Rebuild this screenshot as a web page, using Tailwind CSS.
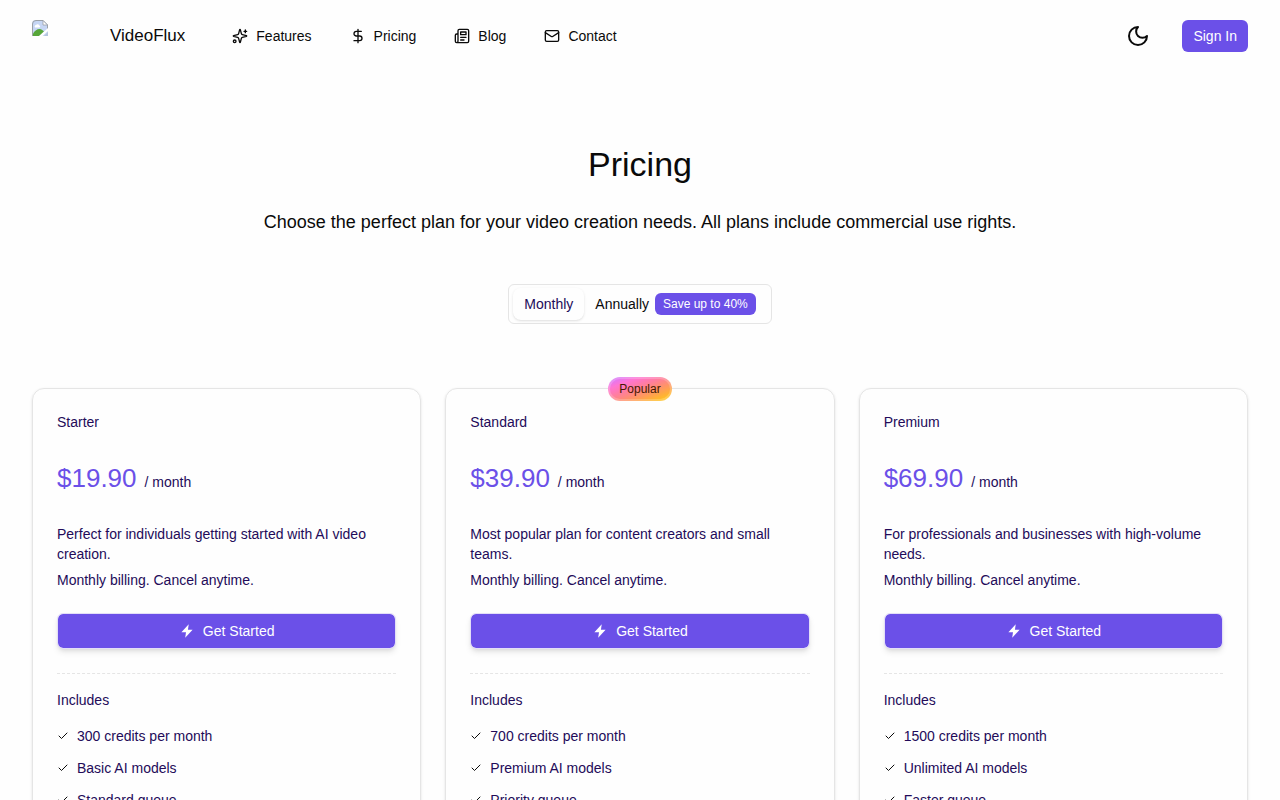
<!DOCTYPE html>
<html lang="en">
<head>
  <meta charset="UTF-8" />
  <meta name="viewport" content="width=device-width, initial-scale=1.0" />
  <title>Pricing - VideoFlux</title>
  <script src="https://cdn.jsdelivr.net/npm/@tailwindcss/browser@4"></script>
</head>
<body class="h-screen overflow-hidden bg-[#fefefe] font-['Liberation_Sans',Arial,sans-serif] text-sm text-[#0a0a0a]">

  <!-- Header -->
  <header class="flex items-center justify-between px-8 py-5">
    <div class="flex items-center">
      <a href="#" class="flex items-center gap-[62px] text-[17px] leading-8">
        <svg class="size-4 self-start" viewBox="0 0 16 16" aria-hidden="true">
          <path d="M4 0h7l5 5v11H0V4a4 4 0 0 1 4-4z" fill="#c6d6f4" />
          <path d="M.5 16V4A3.500 3.500 0 0 1 4 .5h7l4.500 4.500v4" fill="none" stroke="#9aa0a6" />
          <path d="M11 .5V5h4.500z" fill="#fff" stroke="#9aa0a6" stroke-width=".8" />
          <path d="M3 7.500a1.500 1.500 0 0 1 1-2.500 2 2 0 0 1 3.500.5 1.200 1.200 0 0 1 0 2z" fill="#fff" />
          <path d="M1 16v-2.500C3 10.500 5 9 7.500 9c2 0 3.500 1.500 4.500 2.500L7.500 16z" fill="#57a639" />
          <path d="M7 16l9-8v3l-5.500 5z" fill="#fff" />
          <path d="M12 16l4-4v4z" fill="#b4c4dc" />
        </svg>
        <span>VideoFlux</span>
      </a>
      <nav class="ml-7 flex items-center" aria-label="Main">
        <a href="#features" class="flex items-center gap-2 px-[19px]">
          <svg class="size-4" viewBox="0 0 24 24" fill="none" stroke="currentColor" stroke-width="2" stroke-linecap="round" stroke-linejoin="round">
            <path d="M9.937 15.500A2 2 0 0 0 8.500 14.063l-6.135-1.582a.5.5 0 0 1 0-.962L8.500 9.936A2 2 0 0 0 9.937 8.500l1.582-6.135a.5.5 0 0 1 .963 0L14.063 8.500A2 2 0 0 0 15.500 9.937l6.135 1.581a.5.5 0 0 1 0 .964L15.500 14.063a2 2 0 0 0-1.437 1.437l-1.582 6.135a.5.5 0 0 1-.963 0z" />
            <path d="M20 3v4M22 5h-4" />
            <circle cx="4" cy="20" r="2" />
          </svg>
          Features
        </a>
        <a href="#pricing" class="flex items-center gap-2 px-[19px]">
          <svg class="size-4" viewBox="0 0 24 24" fill="none" stroke="currentColor" stroke-width="2" stroke-linecap="round" stroke-linejoin="round">
            <path d="M12 2v20M17 5H9.500a3.500 3.500 0 0 0 0 7h5a3.500 3.500 0 0 1 0 7H6" />
          </svg>
          Pricing
        </a>
        <a href="#blog" class="flex items-center gap-2 px-[19px]">
          <svg class="size-4" viewBox="0 0 24 24" fill="none" stroke="currentColor" stroke-width="2" stroke-linecap="round" stroke-linejoin="round">
            <path d="M4 22h16a2 2 0 0 0 2-2V4a2 2 0 0 0-2-2H8a2 2 0 0 0-2 2v16a2 2 0 0 1-2 2m0 0a2 2 0 0 1-2-2v-9c0-1.100.9-2 2-2h2" />
            <path d="M18 14h-8M15 18h-5M10 6h8v4h-8z" />
          </svg>
          Blog
        </a>
        <a href="#contact" class="flex items-center gap-2 px-[19px]">
          <svg class="size-4" viewBox="0 0 24 24" fill="none" stroke="currentColor" stroke-width="2" stroke-linecap="round" stroke-linejoin="round">
            <rect x="2" y="4" width="20" height="16" rx="2" />
            <path d="m22 7-8.970 5.700a1.940 1.940 0 0 1-2.060 0L2 7" />
          </svg>
          Contact
        </a>
      </nav>
    </div>
    <div class="flex items-center gap-8">
      <button type="button" aria-label="Toggle theme">
        <svg class="size-6" viewBox="0 0 24 24" fill="none" stroke="currentColor" stroke-width="2" stroke-linecap="round" stroke-linejoin="round">
          <path d="M12 3a6 6 0 0 0 9 9 9 9 0 1 1-9-9Z" />
        </svg>
      </button>
      <a href="#signin" class="rounded-md bg-[#6b50e8] px-[11px] py-[6px] leading-5 text-white">Sign In</a>
    </div>
  </header>

  <main class="px-8 pt-[72px]">
    <div class="text-center">
      <h1 class="text-[34px] leading-10">Pricing</h1>
      <p class="mt-6 text-lg leading-7">Choose the perfect plan for your video creation needs. All plans include commercial use rights.</p>
    </div>

    <!-- Billing period -->
    <div role="radiogroup" aria-label="Billing period" class="mx-auto mt-12 flex h-10 w-fit items-center rounded-md border border-[#e5e5e5] px-1">
      <label class="flex h-8 cursor-pointer items-center rounded-lg px-[11px] text-[#230b59] shadow-sm">
        <input type="radio" name="period" value="month" class="sr-only" checked />
        Monthly
      </label>
      <label class="flex h-8 cursor-pointer items-center gap-[6px] px-[11px]">
        <input type="radio" name="period" value="year" class="sr-only" />
        Annually
        <span class="rounded-md bg-[#6b50e8] px-2 py-[3px] text-xs text-white">Save up to 40%</span>
      </label>
    </div>

    <!-- Plans -->
    <div id="plans" class="mt-16 grid grid-cols-3 gap-6 text-[#230b59]"></div>
  </main>

  <script>
    const plans = [
      {
        name: "Starter",
        price: "$19.90",
        text: "Perfect for individuals getting started with AI video creation.",
        items: ["300 credits per month", "Basic AI models", "Standard queue"],
      },
      {
        name: "Standard",
        price: "$39.90",
        text: "Most popular plan for content creators and small teams.",
        items: ["700 credits per month", "Premium AI models", "Priority queue"],
        popular: true,
      },
      {
        name: "Premium",
        price: "$69.90",
        text: "For professionals and businesses with high-volume needs.",
        items: ["1500 credits per month", "Unlimited AI models", "Faster queue"],
      },
    ];

    const badge = `
      <span class="absolute inset-x-0 -top-3 mx-auto flex h-6 w-fit items-center rounded-full border-2 border-white/20 bg-linear-to-br/increasing from-purple-400 to-amber-300 bg-origin-border px-[9px] text-xs text-amber-950">Popular</span>`;

    const item = (label) => `
      <li class="flex items-center gap-2">
        <svg class="size-3" viewBox="0 0 24 24" fill="none" stroke="#0a0a0a" stroke-width="2" stroke-linecap="round" stroke-linejoin="round"><path d="M20 6 9 17l-5-5" /></svg>
        ${label}
      </li>`;

    document.getElementById("plans").innerHTML = plans.map((plan) => `
      <section class="relative rounded-xl border border-[#e5e5e5] px-6 pt-[23px] pb-6 leading-5 shadow-sm">
        ${plan.popular ? badge : ""}
        <h2>${plan.name}</h2>
        <p class="mt-7"><span class="text-[26px] leading-9 text-[#6b50e8]">${plan.price}</span><span class="ml-2">/ month</span></p>
        <p class="mt-7">${plan.text}</p>
        <p class="mt-[6px]">Monthly billing. Cancel anytime.</p>
        <button type="button" class="mt-[23px] flex h-9 w-full cursor-pointer items-center justify-center gap-2 rounded-md border border-[#e3def8] bg-[#6b50e8] bg-clip-padding text-white shadow-md">
          <svg class="size-4" viewBox="0 0 24 24" fill="currentColor"><path d="M14.600 1.700 3.600 14h6.900l-1.200 8.300L20.400 10h-7z" /></svg>
          Get Started
        </button>
        <hr class="mt-6 mb-4 border-dashed border-[#e5e5e5]" />
        <h3>Includes</h3>
        <ul class="mt-4 flex flex-col gap-3">${plan.items.map(item).join("")}</ul>
      </section>`).join("");
  </script>
</body>
</html>
